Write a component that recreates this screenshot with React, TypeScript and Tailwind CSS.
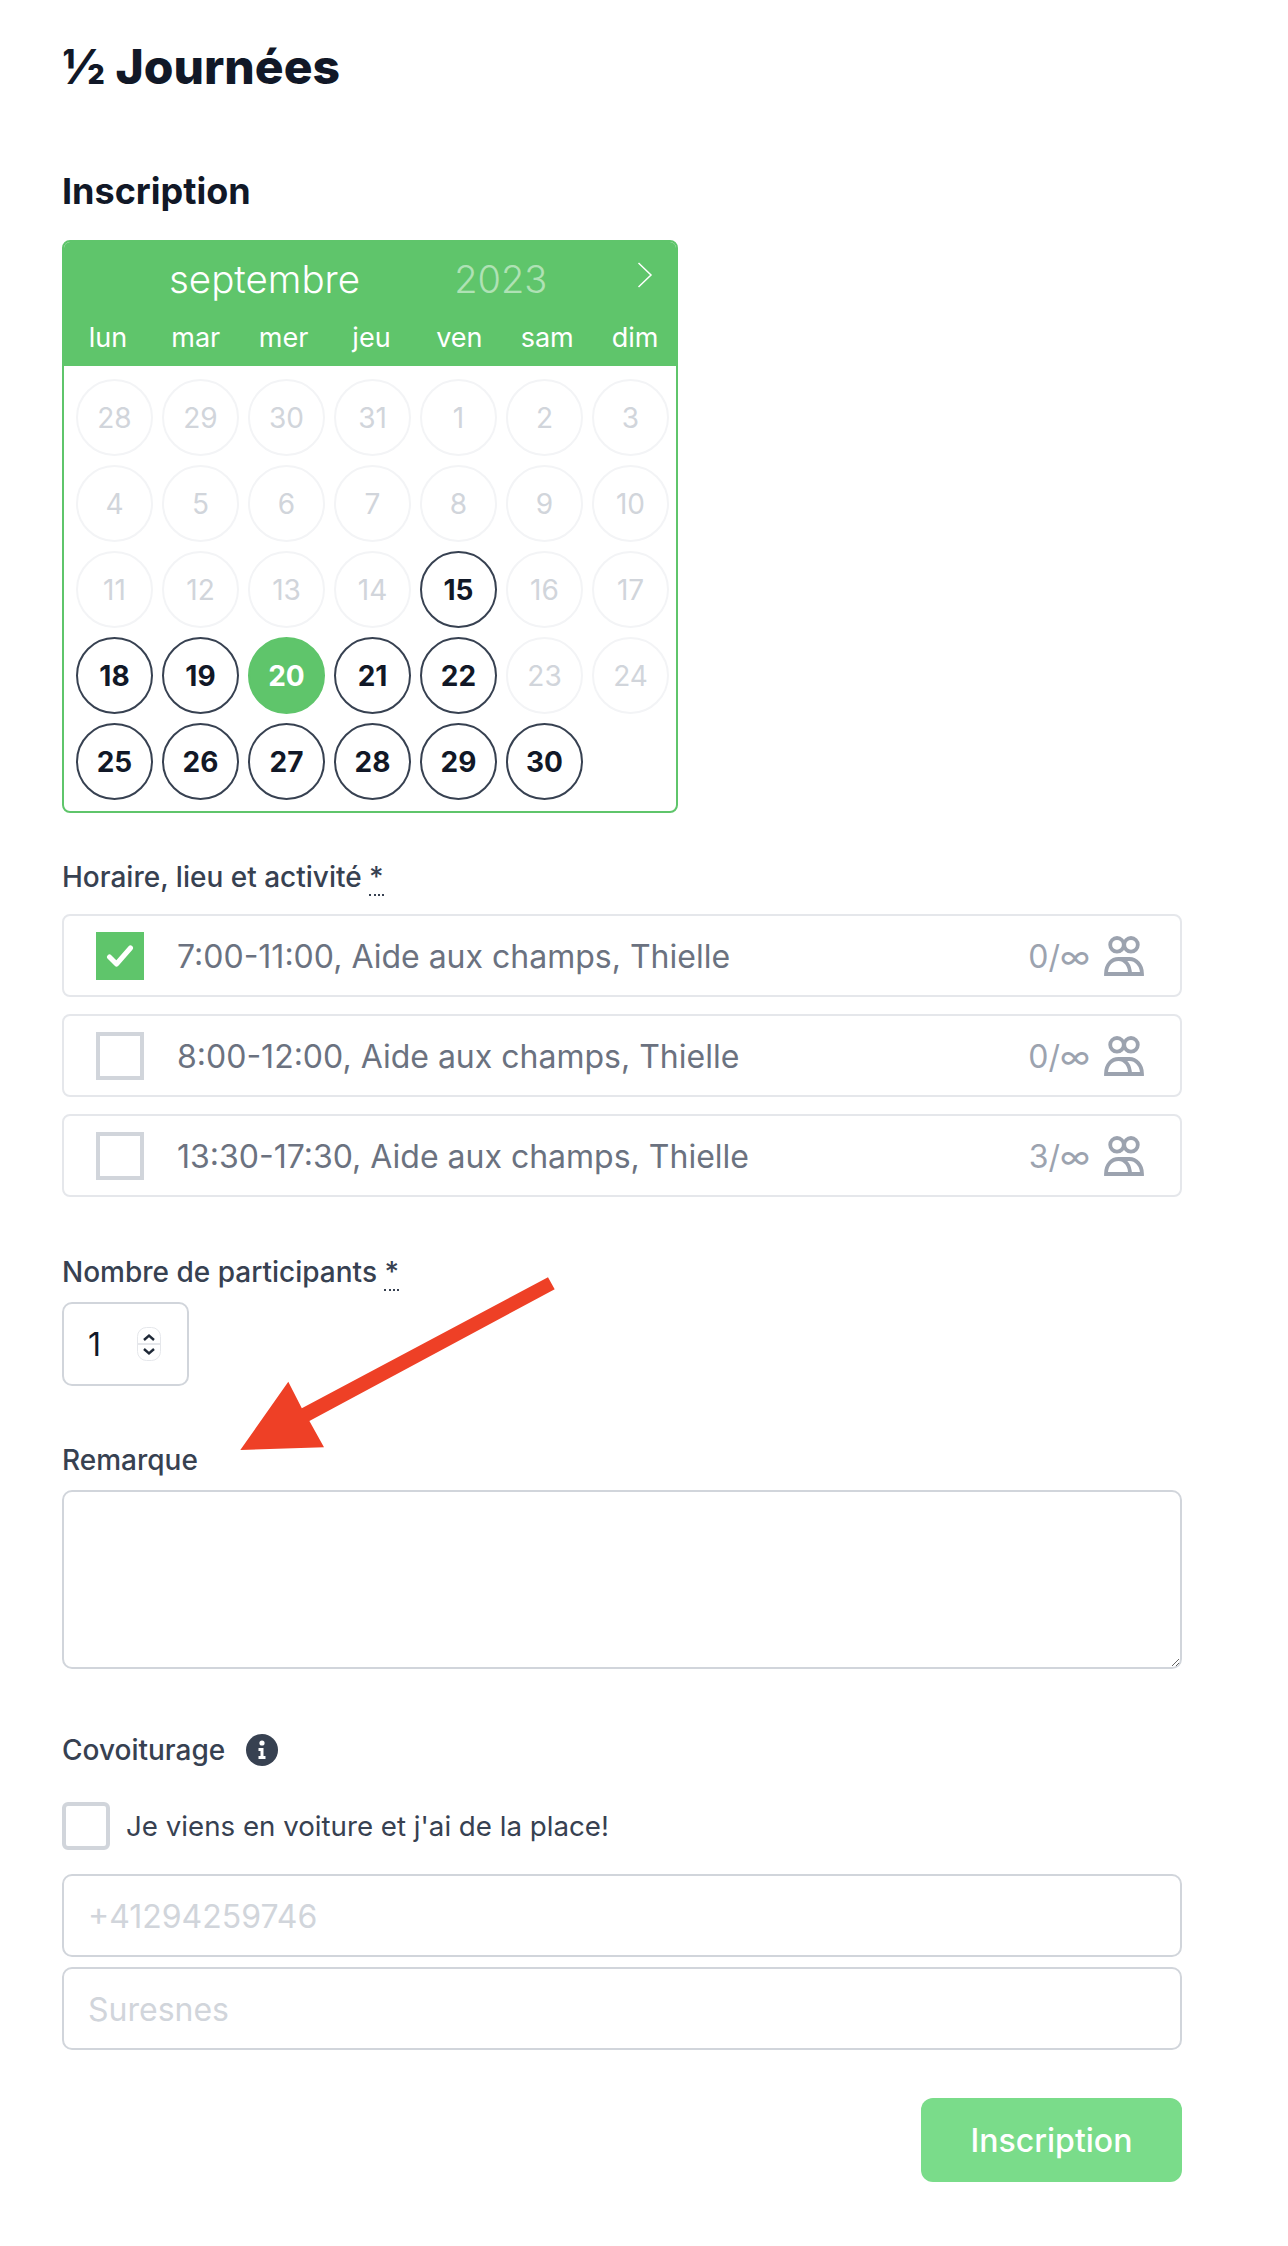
const WEEKDAYS = ['lun', 'mar', 'mer', 'jeu', 'ven', 'sam', 'dim'];

// state: 0 = off, 1 = available, 2 = selected
const DAYS: [number, number][] = [
  [28, 0], [29, 0], [30, 0], [31, 0], [1, 0], [2, 0], [3, 0],
  [4, 0], [5, 0], [6, 0], [7, 0], [8, 0], [9, 0], [10, 0],
  [11, 0], [12, 0], [13, 0], [14, 0], [15, 1], [16, 0], [17, 0],
  [18, 1], [19, 1], [20, 2], [21, 1], [22, 1], [23, 0], [24, 0],
  [25, 1], [26, 1], [27, 1], [28, 1], [29, 1], [30, 1],
];

const SLOTS = [
  { label: '7:00-11:00, Aide aux champs, Thielle', count: '0/∞', checked: true },
  { label: '8:00-12:00, Aide aux champs, Thielle', count: '0/∞', checked: false },
  { label: '13:30-17:30, Aide aux champs, Thielle', count: '3/∞', checked: false },
];

function UsersIcon() {
  return (
    <svg width="40" height="40" viewBox="0 0 40 40" fill="none" stroke="#9ca3af" strokeWidth="3.8" aria-hidden="true">
      <circle cx="13" cy="8.8" r="6.8" />
      <circle cx="27" cy="8.8" r="6.8" />
      <path d="M2 38 C2 28 8 23 14.5 23 C21 23 26 29 26 38 Z" />
      <path d="M14 23 H25.5 C32 23 38 29 38 38 H26" />
    </svg>
  );
}

function InfoIcon() {
  return (
    <svg width="32" height="32" viewBox="0 0 32 32" aria-hidden="true">
      <circle cx="16" cy="16" r="16" fill="#374151" />
      <circle cx="16" cy="9" r="2.6" fill="#fff" />
      <path d="M12.5 14 H17.5 V22 H19.5 V25 H12.5 V22 H14.5 V17 H12.5 Z" fill="#fff" />
    </svg>
  );
}

function Arrow() {
  return (
    <svg
      className="absolute left-[240px] top-[1277px]"
      width="315"
      height="173"
      viewBox="240 1277 315 173"
      aria-hidden="true"
    >
      <polygon
        points="548,1277.3 554.7,1289.3 309.4,1421 324,1447.3 240.3,1450 288.3,1381.7 301.8,1408.3"
        fill="#ee4026"
      />
    </svg>
  );
}

function Required() {
  return <span className="border-b-2 border-dotted border-[#374151] leading-none">*</span>;
}

function Calendar() {
  return (
    <div className="mt-[28px] h-[573px] w-[616px] overflow-hidden rounded-[8px] border-2 border-[#5fc56b]">
      <div className="h-[124px] bg-[#5fc56b] text-white">
        <div className="flex h-[61px] items-center pl-[105px] pt-[12px]">
          <span className="text-[38.5px] font-light leading-[44px]">septembre</span>
          <span className="ml-[94px] text-[38px] font-light leading-[44px] text-white/50">2023</span>
          <svg className="mb-[8px] ml-[90px]" width="16" height="26" viewBox="0 0 16 26" fill="none" stroke="#fff" strokeWidth="1.5" aria-hidden="true">
            <path d="M1.5 1 L14 13 L1.5 25" />
          </svg>
        </div>
        <div className="-mr-[3px] grid grid-cols-7 pt-[19px]">
          {WEEKDAYS.map((day) => (
            <span key={day} className="text-center text-[27px] leading-[32px]">{day}</span>
          ))}
        </div>
      </div>
      <div className="grid grid-cols-[repeat(7,77px)] gap-[9px] pl-[12px] pt-[13px]">
        {DAYS.map(([n, state], i) => (
          <div
            key={i}
            className={
              'flex h-[77px] w-[77px] items-center justify-center rounded-full border-2 text-[28px] ' +
              (state === 0
                ? 'border-[#f3f4f6] text-[#d1d5db]'
                : state === 1
                  ? 'border-[#374151] font-bold text-[#111827]'
                  : 'border-[#5fc56b] bg-[#5fc56b] font-bold text-white')
            }
          >
            {n}
          </div>
        ))}
      </div>
    </div>
  );
}

export default function App() {
  return (
    <div className="relative h-[2246px] bg-white pl-[62px] font-['Inter',sans-serif]" >
      <div className="w-[1120px]">
        <h1 className="pt-[39px] text-[48px] font-extrabold leading-[56px] text-[#111827]">½ Journées</h1>
        <h2 className="mt-[74px] text-[36px] font-bold leading-[44px] text-[#111827]">Inscription</h2>

        <div className="-mt-px">
          <Calendar />
        </div>

        <label className="mt-[47px] block text-[28px] font-medium leading-[34px] text-[#374151]">
          Horaire, lieu et activité <Required />
        </label>
        <div className="mt-[20px] flex flex-col gap-[17px]">
          {SLOTS.map((slot) => (
            <div key={slot.label} className="flex h-[83px] items-center rounded-[8px] border-2 border-[#e5e7eb] pl-[32px] pr-[36px]">
              {slot.checked ? (
                <span className="flex h-[48px] w-[48px] items-center justify-center bg-[#5fc56b]">
                  <svg width="28" height="24" viewBox="0 0 28 24" fill="none" stroke="#fff" strokeWidth="5" strokeLinecap="round" strokeLinejoin="round" aria-hidden="true">
                    <path d="M3.5 13 L10.5 20 L24.5 4" />
                  </svg>
                </span>
              ) : (
                <span className="h-[48px] w-[48px] border-[4px] border-[#d1d5db]" />
              )}
              <span className="ml-[33px] pt-[2px] text-[32px] leading-[40px] text-[#6b7280]">{slot.label}</span>
              <span className="ml-auto pt-[2px] text-[32px] leading-[40px] text-[#9ca3af]">{slot.count}</span>
              <span className="ml-[14px]"><UsersIcon /></span>
            </div>
          ))}
        </div>

        <label className="mt-[58px] block text-[28px] font-medium leading-[34px] text-[#374151]">
          Nombre de participants <Required />
        </label>
        <div className="mt-[13px] flex h-[84px] w-[127px] items-center rounded-[10px] border-2 border-[#d1d5db] pl-[24px]">
          <span className="w-[49px] pt-[2px] text-[32px] leading-[40px] text-[#111827]">1</span>
          <svg width="24" height="34" viewBox="0 0 24 34" fill="none" aria-hidden="true">
            <rect x="0.5" y="0.5" width="23" height="33" rx="9" fill="#fff" stroke="#e5e7eb" />
            <rect x="1" y="16" width="22" height="2" fill="#e5e7eb" />
            <path d="M7 13 L12 8.5 L17 13 M7 22 L12 26.5 L17 22" stroke="#1f2937" strokeWidth="2.4" />
          </svg>
        </div>

        <label className="mt-[57px] block text-[28px] font-medium leading-[34px] text-[#374151]">Remarque</label>
        <textarea className="mt-[13px] block h-[179px] w-full rounded-[10px] border-2 border-[#d1d5db] outline-none" />

        <div className="mt-[64px] flex items-center gap-[21px]">
          <label className="text-[28px] font-medium leading-[34px] text-[#374151]">Covoiturage</label>
          <InfoIcon />
        </div>
        <div className="mt-[35px] flex items-center gap-[16px]">
          <span className="h-[48px] w-[48px] rounded-[6px] border-[4px] border-[#d1d5db]" />
          <span className="text-[27.7px] leading-[34px] text-[#374151]">Je viens en voiture et j'ai de la place!</span>
        </div>
        <input placeholder="+41294259746" className="mt-[24px] block h-[83px] w-full rounded-[10px] border-2 border-[#d1d5db] px-[24px] pt-[2px] text-[32px] outline-none placeholder:text-[#d1d5db]" />
        <input placeholder="Suresnes" className="mt-[10px] block h-[83px] w-full rounded-[10px] border-2 border-[#d1d5db] px-[24px] pt-[2px] text-[32px] outline-none placeholder:text-[#d1d5db]" />
        <div className="mt-[48px] flex justify-end">
          <button className="h-[84px] w-[261px] rounded-[12px] bg-[#7adc8a] pt-[2px] text-[32px] font-medium text-white">Inscription</button>
        </div>
      </div>
      <Arrow />
    </div>
  );
}
